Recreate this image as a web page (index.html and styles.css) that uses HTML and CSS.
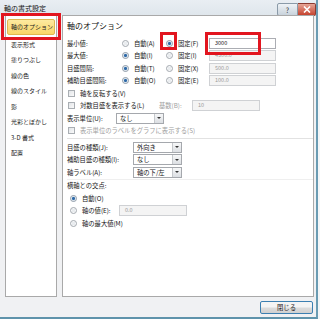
FILE: index.html
```html
<!DOCTYPE html>
<html>
<head>
  <title>軸の書式設定</title>
  <link rel="stylesheet" href="styles.css">
</head>
<body>
  <div class="window">
    <div class="titlebar">
      <span class="title">軸の書式設定</span>
      <div class="caption">
        <span class="cap-btn help">?</span>
        <span class="cap-btn close">
          <svg width="8" height="7" viewBox="0 0 8 7"><path d="M1 0.5 L7 6.5 M7 0.5 L1 6.5" stroke="#fff" stroke-width="1.6"/></svg>
        </span>
      </div>
    </div>

    <div class="main">
      <ul class="nav">
        <li class="selected">軸のオプション</li>
        <li>表示形式</li>
        <li>塗りつぶし</li>
        <li>線の色</li>
        <li>線のスタイル</li>
        <li>影</li>
        <li>光彩とぼかし</li>
        <li>3-D 書式</li>
        <li>配置</li>
      </ul>

      <div class="panel">
        <div class="heading">軸のオプション</div>

        <div class="row">
          <span class="label">最小値:</span>
          <span class="opt"><span class="radio"></span>自動(A)</span>
          <span class="opt"><span class="radio on"></span>固定(F)</span>
          <span class="field">3000</span>
        </div>
        <div class="row">
          <span class="label">最大値:</span>
          <span class="opt"><span class="radio on"></span>自動(I)</span>
          <span class="opt"><span class="radio"></span>固定(I)</span>
          <span class="field off">4500.0</span>
        </div>
        <div class="row">
          <span class="label">目盛間隔:</span>
          <span class="opt"><span class="radio on"></span>自動(T)</span>
          <span class="opt"><span class="radio"></span>固定(X)</span>
          <span class="field off">500.0</span>
        </div>
        <div class="row">
          <span class="label">補助目盛間隔:</span>
          <span class="opt"><span class="radio on"></span>自動(O)</span>
          <span class="opt"><span class="radio"></span>固定(E)</span>
          <span class="field off">100.0</span>
        </div>

        <div class="row">
          <span class="check"></span>軸を反転する(V)
        </div>
        <div class="row">
          <span class="check"></span><span class="log-label">対数目盛を表示する(L)</span>
          <span class="base dim">基数(B):</span>
          <span class="field off base-field">10</span>
        </div>
        <div class="row">
          <span class="unit-label">表示単位(U):</span>
          <span class="select unit-select">なし<span class="arrow"></span></span>
        </div>
        <div class="row dim">
          <span class="check"></span>表示単位のラベルをグラフに表示する(S)
        </div>

        <div class="sep"></div>

        <div class="row">
          <span class="tick-label">目盛の種類(J):</span>
          <span class="select">外向き<span class="arrow"></span></span>
        </div>
        <div class="row">
          <span class="tick-label">補助目盛の種類(I):</span>
          <span class="select">なし<span class="arrow"></span></span>
        </div>
        <div class="row">
          <span class="tick-label">軸ラベル(A):</span>
          <span class="select">軸の下/左<span class="arrow"></span></span>
        </div>

        <div class="sep thin"></div>

        <div class="row">横軸との交点:</div>
        <div class="row indent">
          <span class="radio on"></span>自動(O)
        </div>
        <div class="row indent">
          <span class="radio"></span><span class="cross-label">軸の値(E):</span>
          <span class="field off cross-field">0.0</span>
        </div>
        <div class="row indent">
          <span class="radio"></span>軸の最大値(M)
        </div>
      </div>
    </div>

    <div class="footer">
      <button class="btn">閉じる</button>
    </div>

    <div class="mark mark-nav"></div>
    <div class="mark mark-radio"></div>
    <div class="mark mark-field"></div>
  </div>
</body>
</html>
```

FILE: styles.css
```css
body {
  margin: 0;
  background: #f3f5f7;
  font-family: "Noto Sans CJK JP", "Noto Sans", sans-serif;
  color: #151515;
}

.window {
  position: relative;
  box-sizing: border-box;
  width: 318px;
  height: 319px;
  background: #f0f1f3;
  border-right: 2px solid #6a9bb2;
  border-bottom: 2px solid #5f93ab;
}

.titlebar {
  display: flex;
  align-items: center;
  justify-content: space-between;
  height: 15px;
  padding-left: 4px;
  background: linear-gradient(#e9eef3, #dfe6ec);
}
.title {
  font-size: 7px;
  color: #111;
}
.caption {
  display: flex;
  align-self: flex-start;
  margin-top: 3px;
}
.cap-btn {
  display: flex;
  align-items: center;
  justify-content: center;
  height: 11px;
  font-size: 7px;
  border: 1px solid #8a9aa8;
}
.help {
  width: 19px;
  color: #333;
  background: linear-gradient(#eef2f6, #c9d3dc);
  border-radius: 2px 0 0 2px;
}
.close {
  width: 17px;
  background: linear-gradient(#e6a596, #c5432f);
  border-color: #8b3a30;
  border-left: none;
  border-radius: 0 2px 2px 0;
}

.main {
  display: flex;
  gap: 5px;
  height: 282px;
  padding: 0 0 0 5px;
}

.nav {
  box-sizing: border-box;
  width: 52px;
  margin: 0;
  padding: 3px 1px 0 1px;
  list-style: none;
  background: #fff;
  border: 1px solid #a9a9a9;
  font-size: 6px;
  color: #222;
}
.nav li {
  height: 15.5px;
  line-height: 15.5px;
  padding-left: 4px;
  white-space: nowrap;
}
.nav li.selected {
  background: linear-gradient(#fdeaa0, #f9d668);
  border: 1px solid #e0b850;
  border-radius: 2px;
  height: 14px;
  line-height: 14px;
  margin-bottom: 1.5px;
  padding-left: 3px;
}

.panel {
  box-sizing: border-box;
  width: 252px;
  padding: 3px 4px 0 4px;
  background: #fff;
  border: 1px solid #a9a9a9;
  font-size: 6.3px;
}
.heading {
  font-size: 8px;
  height: 14px;
  line-height: 14px;
  margin-bottom: 4px;
  color: #111;
}
.row {
  display: flex;
  align-items: center;
  height: 12.5px;
  white-space: nowrap;
}
.label {
  width: 54px;
}
.opt {
  display: flex;
  align-items: center;
  width: 44px;
}

.radio {
  box-sizing: border-box;
  width: 7px;
  height: 7px;
  margin-right: 5px;
  border: 1px solid #a2a8ae;
  border-radius: 50%;
  background: radial-gradient(circle, #e9ecef 40%, #fff 70%);
}
.radio.on {
  border-color: #8c99a6;
  background: radial-gradient(circle, #2f6aa8 35%, #9bb7d3 45%, #fff 65%);
}
.opt .radio {
  margin-left: 1px;
}

.check {
  box-sizing: border-box;
  width: 7px;
  height: 7px;
  margin: 0 5px 0 1px;
  border: 1px solid #a9aeb3;
  background: linear-gradient(135deg, #e2e5e8, #fafafa);
}

.field {
  box-sizing: border-box;
  width: 67px;
  height: 11px;
  line-height: 9px;
  padding-left: 5px;
  border: 1px solid #abadb3;
  background: #fff;
  font-size: 5.5px;
}
.field.off {
  background: #f4f4f4;
  border-color: #cfd1d4;
  color: #9a9a9a;
}

.log-label {
  width: 79px;
}
.base {
  width: 33px;
}
.base-field {
  width: 68px;
}
.dim {
  color: #a0a0a0;
}

.unit-label {
  width: 49px;
}
.tick-label {
  width: 66px;
}
.select {
  box-sizing: border-box;
  display: flex;
  align-items: center;
  width: 49px;
  height: 11px;
  padding-left: 3px;
  border: 1px solid #a5a8ad;
  background: #fff;
}
.unit-select {
  width: 48px;
}
.arrow {
  box-sizing: border-box;
  margin-left: auto;
  width: 9px;
  height: 9px;
  border-left: 1px solid #c5c8cc;
  background: linear-gradient(#f6f7f8, #dcdfe3);
  display: flex;
  align-items: center;
  justify-content: center;
}
.arrow::after {
  content: "";
  border-left: 2px solid transparent;
  border-right: 2px solid transparent;
  border-top: 2px solid #333;
}

.sep {
  height: 1px;
  margin: 1px -4px 2px 0;
  background: #e2e2e2;
}
.sep.thin {
  margin: 0 -4px 0 0;
  background: #efefef;
}

.indent {
  padding-left: 3px;
}
.cross-label {
  width: 37px;
}
.cross-field {
  width: 68px;
}

.footer {
  display: flex;
  justify-content: flex-end;
  padding: 4px 3px 0 0;
}
.btn {
  width: 53px;
  height: 13px;
  padding: 0;
  font-family: "Noto Sans CJK JP", sans-serif;
  font-size: 6.3px;
  color: #151515;
  background: linear-gradient(#f4f4f4 45%, #dcdcdc 55%, #d0d0d0);
  border: 1px solid #3c7fb1;
  border-radius: 2px;
}

.mark {
  position: absolute;
  border: 3px solid #e2151f;
}
.mark-nav {
  left: 1px;
  top: 13px;
  width: 54px;
  height: 21px;
}
.mark-radio {
  left: 160px;
  top: 32px;
  width: 11px;
  height: 12px;
}
.mark-field {
  left: 205px;
  top: 32px;
  width: 50px;
  height: 17px;
}
```
